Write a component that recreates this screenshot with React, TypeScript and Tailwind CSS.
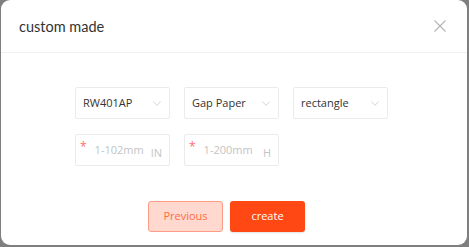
import React from 'react';

function Chevron() {
  return (
    <svg className="w-[8px] h-[5px] text-[#c8c8c8]" viewBox="0 0 8 5" fill="none" stroke="currentColor" strokeWidth={0.8}>
      <path d="M0.3 0.5 L4 4.3 L7.7 0.5" />
    </svg>
  );
}

function Select({ value }: { value: string }) {
  return (
    <div className="w-[95px] h-[32px] border border-[#ebebeb] rounded-[2px] flex items-center justify-between pl-[7px] pr-[8px] text-[11px] text-[#333]">
      <span>{value}</span>
      <Chevron />
    </div>
  );
}

function SizeInput({ placeholder, unit }: { placeholder: string; unit: string }) {
  return (
    <div className="w-[95px] h-[32px] border border-[#ebebeb] rounded-[2px] flex items-center pl-[4px] pr-[7px] text-[11px]">
      <span className="text-[#ff6b6b] text-[12px] leading-none self-start mt-[6px] mr-[8px]">*</span>
      <span className="text-[#c4c4c4] flex-1">{placeholder}</span>
      <span className="text-[#c4c4c4] mt-[7px]">{unit}</span>
    </div>
  );
}

export default function App() {
  return (
    <div className="w-[469px] h-[247px] bg-[#7f7f7f] overflow-hidden" style={{ fontFamily: '"Open Sans", "Noto Sans", sans-serif' }}>
      <div className="ml-[1px] w-[466px] h-[245px] bg-white rounded-[9px] flex flex-col">
        {/* Header */}
        <div className="h-[53px] border-b border-[#f0f0f0] flex items-center justify-between pl-[18px] pr-[21px]">
          <span className="text-[14.5px] text-[#333] mt-[1px]" style={{ fontFamily: 'Lato, "Open Sans", sans-serif' }}>custom made</span>
          <svg className="w-[12px] h-[12px] text-[#b4b4b4]" viewBox="0 0 12 12" fill="none" stroke="currentColor" strokeWidth={1.1}>
            <path d="M0.5 0.5 L11.5 11.5 M11.5 0.5 L0.5 11.5" />
          </svg>
        </div>

        {/* Body */}
        <div className="pt-[34px] pl-[74px] flex flex-col gap-[15px]">
          <div className="flex gap-[14px]">
            <Select value="RW401AP" />
            <Select value="Gap Paper" />
            <Select value="rectangle" />
          </div>
          <div className="flex gap-[14px]">
            <SizeInput placeholder="1-102mm" unit="IN" />
            <SizeInput placeholder="1-200mm" unit="H" />
          </div>
        </div>

        {/* Footer */}
        <div className="mt-[35px] pl-[147px] flex gap-[7px]">
          <button className="w-[75px] h-[31px] rounded-[3px] bg-[#ffd9d0] border border-[#ff9c85] text-[#ff6c44] text-[11px]">
            Previous
          </button>
          <button className="w-[75px] h-[31px] rounded-[3px] bg-[#ff4814] text-white text-[11px] shadow-[0_1px_2px_rgba(0,0,0,0.12)]">
            create
          </button>
        </div>
      </div>
    </div>
  );
}
